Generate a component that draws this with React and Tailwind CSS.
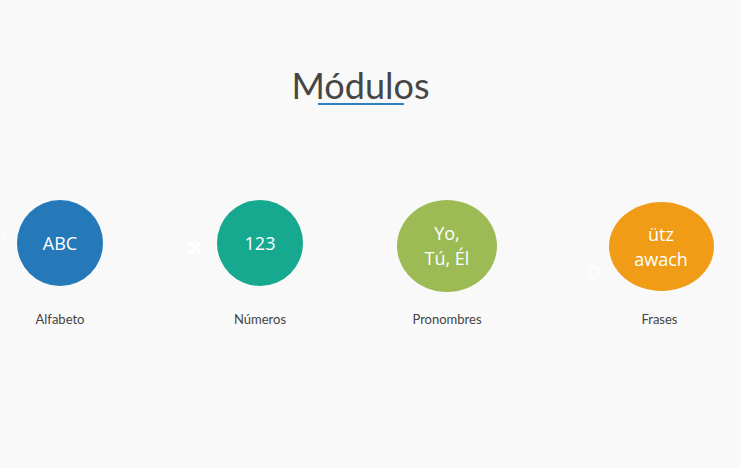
import React from "react";

const font = { fontFamily: "Lato, 'Open Sans', sans-serif" };
const circleFont = { fontFamily: "'Open Sans', Lato, sans-serif" };

export default function App() {
  return (
    <div className="relative w-[741px] h-[468px] bg-[#f9f9f9] overflow-hidden" style={font}>
      <div className="flex flex-col items-center pt-[63px] pr-[20px]">
        <h1 className="text-[36px] leading-[44px] text-[#464646] font-normal">Módulos</h1>
        <div className="w-[86px] h-[2px] bg-[#2a82c4] -mt-[4px]"></div>
      </div>

      <div className="flex items-start mt-[95px]">
        <div className="w-[120px] flex flex-col items-center">
          <div className="h-[111px] flex items-start">
            <div className="w-[86px] h-[86px] rounded-full bg-[#2679b9] flex items-center justify-center text-white text-[18px]" style={circleFont}>ABC</div>
          </div>
          <div className="text-[13px] text-[#444] leading-[16px]">Alfabeto</div>
        </div>

        <div className="ml-[80px] w-[120px] flex flex-col items-center">
          <div className="h-[111px] flex items-start">
            <div className="w-[86px] h-[86px] rounded-full bg-[#16a98f] flex items-center justify-center text-white text-[18px]" style={circleFont}>123</div>
          </div>
          <div className="text-[13px] text-[#444] leading-[16px]">Números</div>
        </div>

        <div className="ml-[67px] w-[120px] flex flex-col items-center">
          <div className="h-[111px] flex items-start">
            <div className="w-[100px] h-[92px] rounded-[50%] bg-[#9cbb55] flex flex-col items-center justify-center text-white text-[18px] leading-[25px] text-center" style={circleFont}>
              <span>Yo,</span>
              <span>Tú, Él</span>
            </div>
          </div>
          <div className="text-[13px] text-[#444] leading-[16px]">Pronombres</div>
        </div>

        <div className="ml-[94px] w-[120px] flex flex-col items-center">
          <div className="h-[111px] flex items-start pt-[2px]">
            <div className="w-[105px] h-[89px] rounded-[50%] bg-[#f09c16] flex flex-col items-center justify-center text-white text-[18px] leading-[25px] text-center" style={circleFont}>
              <span>ütz</span>
              <span>awach</span>
            </div>
          </div>
          <div className="text-[13px] text-[#444] leading-[16px] -ml-[3px]">Frases</div>
        </div>
      </div>

      <span className="absolute left-[-1px] top-[229px] text-white text-[16px] leading-[20px]">?</span>
      <svg className="absolute left-[188px] top-[241px]" width="14" height="14" viewBox="0 0 14 14" fill="none" stroke="#fff" strokeWidth="2">
        <path d="M2 2l10 10M12 2L2 12M2 2h4M2 2v4M12 2h-4M12 2v4M2 12h4M2 12v-4M12 12h-4M12 12v-4" />
      </svg>
      <svg className="absolute left-[588px] top-[265px]" width="12" height="15" viewBox="0 0 12 15" fill="none" stroke="#fff" strokeWidth="1.5">
        <ellipse cx="6" cy="7.5" rx="4.5" ry="6" />
        <path d="M6 1.5v3M6 10.5v3" />
      </svg>
    </div>
  );
}
